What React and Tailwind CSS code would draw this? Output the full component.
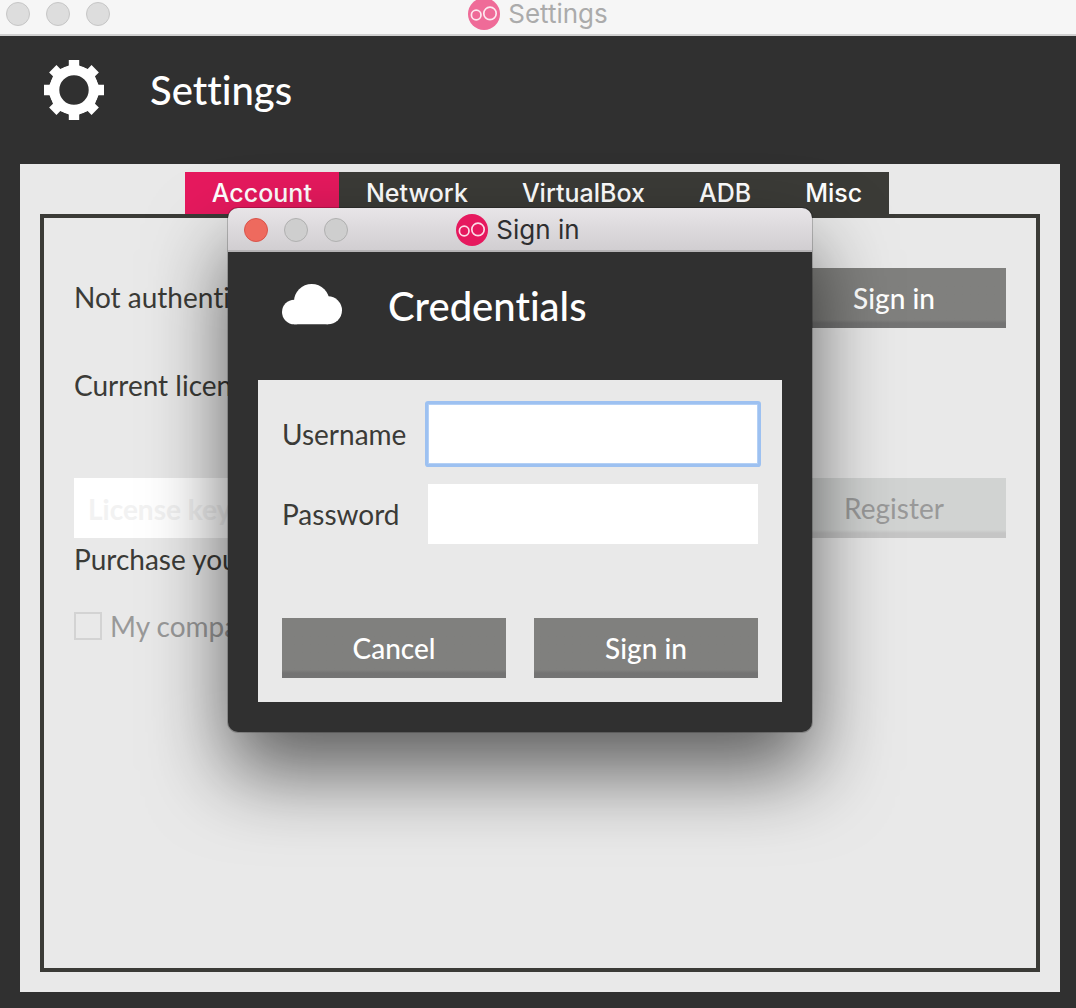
function Logo({ className }) {
  return (
    <svg viewBox="0 0 32 32" className={`size-8 shrink-0 ${className}`} aria-hidden="true">
      <circle cx="16" cy="16" r="16" fill="currentColor" />
      <circle cx="8.2" cy="17" r="4.8" fill="none" stroke="#fff" strokeOpacity="0.85" strokeWidth="1.7" />
      <circle cx="22" cy="15.4" r="6.2" fill="none" stroke="#fff" strokeOpacity="0.85" strokeWidth="1.7" />
    </svg>
  );
}

function GearIcon() {
  return (
    <svg viewBox="-30 -30 60 60" className="size-[60px] shrink-0" aria-hidden="true">
      <circle r="19.7" fill="none" stroke="#fff" strokeWidth="10" />
      {[0, 45, 90, 135, 180, 225, 270, 315].map((angle) => (
        <path key={angle} d="M-5.2 -30H5.2V-24.5L10 -22V-20H-10V-22L-5.2 -24.5Z" fill="#fff" transform={`rotate(${angle})`} />
      ))}
    </svg>
  );
}

function CloudIcon() {
  return (
    <svg viewBox="0 -8 60 60" className="size-[60px] shrink-0" aria-hidden="true" fill="#fff">
      <circle cx="12.3" cy="28" r="12.3" />
      <circle cx="29.7" cy="17.8" r="17.8" />
      <circle cx="46" cy="26.3" r="14" />
      <path d="M12 20H46V40.3H12Z" />
    </svg>
  );
}

const INACTIVE = "border-[#c6c6c6] bg-[#dddddd]";
const INACTIVE_DARK = "border-[#b0b0b0] bg-[#cecece]";
const CLOSE = "border-[#d9534a] bg-[#ee6a5e]";

function WindowControls({ colors }) {
  return (
    <div className="flex gap-4">
      {["Close", "Minimize", "Zoom"].map((name, i) => (
        <button key={name} type="button" aria-label={name} className={`size-6 rounded-full border ${colors[i]}`} />
      ))}
    </div>
  );
}

function Header({ icon, title, className }) {
  return (
    <header className={`flex items-center gap-[46px] pt-6 pb-11 ${className}`}>
      {icon}
      <h1 className="text-[40px] leading-[60px] font-medium text-white">{title}</h1>
    </header>
  );
}

function ActionButton({ children, disabled, className }) {
  return (
    <button
      type="button"
      disabled={disabled}
      className={`h-[60px] text-[28px] leading-8 ${
        disabled
          ? "bg-linear-to-b from-[#d1d3d2] from-[52px] to-[#c5c5c5] to-[55px] text-[#999999]"
          : "bg-linear-to-b from-[#80807e] from-[52px] to-[#737373] to-[55px] font-medium text-white"
      } ${className}`}
    >
      {children}
    </button>
  );
}

const TABS = ["Account", "Network", "VirtualBox", "ADB", "Misc"];

function SignInDialog() {
  return (
    <section
      role="dialog"
      aria-label="Sign in"
      className="absolute top-[208px] left-[228px] w-[584px] overflow-hidden rounded-[10px] bg-[#303030] shadow-[0_0_0_1px_rgba(0,0,0,0.2),0_40px_80px_rgba(0,0,0,0.6)]"
    >
      <div className="grid h-11 grid-cols-[1fr_auto_1fr] content-center items-center border-b-2 border-[#b5b3b5] bg-linear-to-b from-[#e8e5e8] to-[#d1ced1] px-4 pt-0.5">
        <WindowControls colors={[CLOSE, INACTIVE_DARK, INACTIVE_DARK]} />
        <div className="flex items-center gap-2 pr-1 font-['Inter',sans-serif] text-[26px] leading-8 text-[#2e2e30]">
          <Logo className="text-[#e6195e]" />
          Sign in
        </div>
      </div>
      <Header icon={<CloudIcon />} title="Credentials" className="px-[54px]" />
      <form className="mx-[30px] mb-[30px] bg-[#e9e9e9] p-6">
        <div className="grid grid-cols-[126px_1fr] items-center gap-5">
          <label htmlFor="username">Username</label>
          <input
            id="username"
            type="text"
            className="h-[60px] w-full rounded-[1px] border border-[#b4d0f5] bg-white px-3 ring-3 ring-[#9dc1f1] outline-none"
          />
          <label htmlFor="password">Password</label>
          <input id="password" type="password" className="h-[60px] w-full bg-white px-3 outline-none" />
        </div>
        <div className="mt-[74px] grid grid-cols-2 gap-7">
          <ActionButton>Cancel</ActionButton>
          <ActionButton>Sign in</ActionButton>
        </div>
      </form>
    </section>
  );
}

export default function App() {
  return (
    <div className="relative flex min-h-screen flex-col bg-[#303030] font-['Lato',sans-serif] text-[28px] leading-8 text-[#3b3b37] [font-variant-ligatures:none]">
      <div className="grid h-9 grid-cols-[1fr_auto_1fr] content-center items-center border-b-2 border-[#d0d0d0] bg-[#f6f6f6] px-1.5 pb-1.5">
        <WindowControls colors={[INACTIVE, INACTIVE, INACTIVE]} />
        <div className="flex items-center gap-2 font-['Inter',sans-serif] text-[26px] leading-7 text-[#ababab]">
          <Logo className="text-[#ef6b98]" />
          Settings
        </div>
      </div>
      <Header icon={<GearIcon />} title="Settings" className="px-11" />
      <main className="mr-4 mb-4 ml-5 flex flex-1 flex-col bg-[#e9e9e9] px-5 pt-2 pb-5">
        <nav className="mr-1.5 flex justify-center font-['Inter',sans-serif] text-[25px] font-medium text-white" role="tablist">
          {TABS.map((tab, i) => (
            <button
              key={tab}
              type="button"
              role="tab"
              aria-selected={i === 0}
              className={`h-[42px] px-[27px] ${i === 0 ? "bg-[#e6195e]" : "bg-[#3b3b37]"}`}
            >
              {tab}
            </button>
          ))}
        </nav>
        <div className="flex-1 border-4 border-[#3b3b37] px-[30px] pt-[50px]">
          <div className="flex items-center justify-between">
            <p className="pb-0.5">Not authenticated</p>
            <ActionButton className="w-56">Sign in</ActionButton>
          </div>
          <p className="mt-[41px]">Current license</p>
          <div className="mt-[77px] flex gap-7">
            <input
              type="text"
              aria-label="License key"
              placeholder="License key"
              className="h-[60px] min-w-0 flex-1 bg-white px-3.5 pt-0.5 font-bold outline-none placeholder:text-[#f2f2f2]"
            />
            <ActionButton disabled className="w-56">
              Register
            </ActionButton>
          </div>
          <p className="mt-[5px]">Purchase your license</p>
          <label className="mt-[35px] flex items-center gap-2 text-[#999999]">
            <input type="checkbox" disabled className="size-7 appearance-none border-2 border-[#d3d3d3]" />
            My company
          </label>
        </div>
      </main>
      <SignInDialog />
    </div>
  );
}
